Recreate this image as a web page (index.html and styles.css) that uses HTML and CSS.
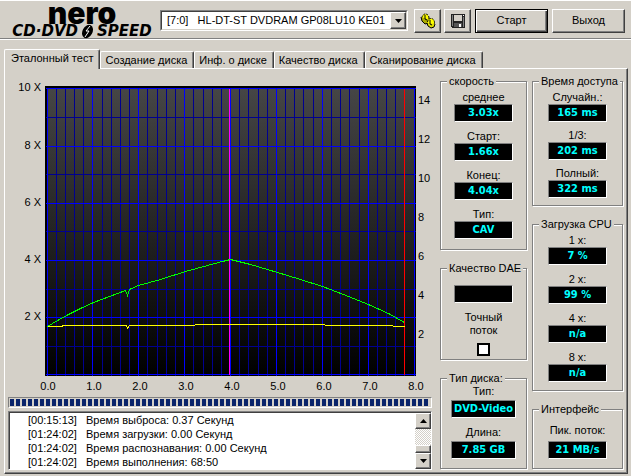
FILE: index.html
```html
<!DOCTYPE html>
<html lang="ru">
<head>
    <meta charset="UTF-8">
    <meta name="viewport" content="width=device-width, initial-scale=1.0">
    <title>Nero CD-DVD Speed</title>
    <link rel="stylesheet" href="styles.css">
</head>
<body>
    <header class="toolbar">
        <div class="logo">
            <span class="logo-nero">nero</span>
            <span class="logo-speed">CD·DVD
                <svg width="15" height="15" viewBox="0 0 15 15"><ellipse cx="7.5" cy="7.5" rx="5" ry="7" transform="rotate(28 7.5 7.5)" fill="#000"/><path d="M10 2L6 7h3l-4 6" fill="none" stroke="#fff" stroke-width="1"/></svg>
                SPEED</span>
        </div>
        <div class="drive">
            <select id="drive" aria-label="Привод">
                <option>[7:0]&nbsp;&nbsp; HL-DT-ST DVDRAM GP08LU10 KE01</option>
            </select>
            <span class="drive-arrow"><svg width="7" height="4" viewBox="0 0 7 4"><path d="M0 0h7L3.500 4z"/></svg></span>
        </div>
        <button class="btn btn-icon" aria-label="Настройки">
            <svg width="16" height="16" viewBox="0 0 16 16">
                <g stroke="#000" stroke-width="1">
                    <ellipse cx="5.500" cy="5" rx="3.500" ry="4" fill="#ff0" stroke-dasharray="2 1"/>
                    <path d="M1 4l1 4 3 3 4-1 1-3" fill="#aa0"/>
                    <path d="M5 2v4l2 1" fill="none"/>
                    <ellipse cx="11" cy="9.500" rx="3.500" ry="4" fill="#ff0" stroke-dasharray="2 1"/>
                    <path d="M7 10l1 3 3 2 3-1 1-3" fill="#dd0"/>
                    <path d="M10 7v4l2 1" fill="none"/>
                </g>
            </svg>
        </button>
        <button class="btn btn-icon" aria-label="Сохранить">
            <svg width="14" height="14" viewBox="0 0 14 14" shape-rendering="crispEdges">
                <path d="M0 0h14v14H1L0 13z" fill="#222"/>
                <path d="M1 1h1v11H1zM12 3h1v10h-1z" fill="#808080"/>
                <path d="M3 1h8v6H3z" fill="#d4d0c8"/>
                <path d="M12 1h1v1h-1z" fill="#fff"/>
                <path d="M3 9h8v4H3z" fill="#555"/>
                <path d="M8 10h2v3H8z" fill="#fff"/>
            </svg>
        </button>
        <button class="btn btn-default">Старт</button>
        <button class="btn">Выход</button>
    </header>

    <nav class="tabs">
        <a href="#bench" class="tab active">Эталонный тест</a>
        <a href="#create" class="tab">Создание диска</a>
        <a href="#info" class="tab">Инф. о диске</a>
        <a href="#quality" class="tab">Качество диска</a>
        <a href="#scan" class="tab">Сканирование диска</a>
    </nav>

    <main class="panel" id="bench">
        <section class="left">
            <svg class="chart" viewBox="0 0 424 320">
                <defs>
                    <linearGradient id="plotBg" x1="0" y1="0" x2="0" y2="1">
                        <stop offset="0" stop-color="#464646"/>
                        <stop offset="1" stop-color="#000"/>
                    </linearGradient>
                </defs>
                <rect x="37" y="11" width="371" height="290" fill="#000"/>
                <rect x="39" y="13" width="368" height="287" fill="url(#plotBg)"/>
                <g class="lines" transform="translate(.5 .5)">
                    <path class="minor" d="M48 13V300M57 13V300M66 13V300M75 13V300M94 13V300M103 13V300M112 13V300M121 13V300M139 13V300M149 13V300M158 13V300M167 13V300M185 13V300M195 13V300M204 13V300M213 13V300M231 13V300M240 13V300M250 13V300M259 13V300M277 13V300M286 13V300M295 13V300M305 13V300M323 13V300M332 13V300M341 13V300M351 13V300M369 13V300M378 13V300M387 13V300M396 13V300"/>
                    <path class="minor" d="M37 42H407M37 99H407M37 156H407M37 214H407M37 271H407"/>
                    <path class="major" d="M39 13V300M84 13V300M130 13V300M176 13V300M222 13V300M268 13V300M314 13V300M360 13V300M406 13V300"/>
                    <path class="major" d="M37 13H407M37 71H407M37 128H407M37 185H407M37 242H407M37 299H407"/>
                    <path class="layer" d="M221 13V299"/>
                    <path class="end" d="M396 13V299"/>
                    <polyline class="speed" points="39,251 49,245 60,239 72,233 85,227 109,218 117,215 119,220 121,214 130,210 152,204 177,196 210,187 222,184 242,189 269,197 292,204 314,211 335,219 360,229 380,238 396,247"/>
                    <polyline class="rotation" points="39,251 54,251 54,250 118,250 119,253 121,250 186,250 187,249 316,249 317,250 384,250 385,251 396,251"/>
                </g>
                <g text-anchor="end">
                    <text x="33" y="16">10 X</text>
                    <text x="33" y="74">8 X</text>
                    <text x="33" y="131">6 X</text>
                    <text x="33" y="188">4 X</text>
                    <text x="33" y="245">2 X</text>
                </g>
                <g>
                    <text x="410" y="29">14</text>
                    <text x="410" y="68">12</text>
                    <text x="410" y="107">10</text>
                    <text x="410" y="146">8</text>
                    <text x="410" y="185">6</text>
                    <text x="410" y="224">4</text>
                    <text x="410" y="263">2</text>
                </g>
                <g text-anchor="middle">
                    <text x="40" y="315">0.0</text>
                    <text x="86" y="315">1.0</text>
                    <text x="132" y="315">2.0</text>
                    <text x="178" y="315">3.0</text>
                    <text x="224" y="315">4.0</text>
                    <text x="270" y="315">5.0</text>
                    <text x="316" y="315">6.0</text>
                    <text x="362" y="315">7.0</text>
                    <text x="408" y="315">8.0</text>
                </g>
            </svg>
            <div class="progress"><div class="progress-bar"></div></div>
            <div class="log">
                <ul class="log-lines">
                    <li><span class="time">[00:15:13]</span>Время выброса: 0.37 Секунд</li>
                    <li><span class="time">[01:24:02]</span>Время загрузки: 0.00 Секунд</li>
                    <li><span class="time">[01:24:02]</span>Время распознавания: 0.00 Секунд</li>
                    <li><span class="time">[01:24:02]</span>Время выполнения: 68:50</li>
                </ul>
                <div class="scroll">
                    <button class="scroll-btn" aria-label="Вверх"><svg width="7" height="4" viewBox="0 0 7 4"><path d="M0 4h7L3.500 0z"/></svg></button>
                    <div class="scroll-track"><div class="scroll-thumb"></div></div>
                    <button class="scroll-btn" aria-label="Вниз"><svg width="7" height="4" viewBox="0 0 7 4"><path d="M0 0h7L3.500 4z"/></svg></button>
                </div>
            </div>
        </section>

        <section class="col">
            <fieldset class="group speed-group">
                <legend>скорость</legend>
                <div class="item">среднее<output class="value">3.03x</output></div>
                <div class="item">Старт:<output class="value">1.66x</output></div>
                <div class="item">Конец:<output class="value">4.04x</output></div>
                <div class="item">Тип:<output class="value">CAV</output></div>
            </fieldset>
            <fieldset class="group dae-group">
                <legend>Качество DAE</legend>
                <output class="value"></output>
                <label class="exact">Точный<br>поток<input type="checkbox"></label>
            </fieldset>
            <fieldset class="group disc-group">
                <legend>Тип диска:</legend>
                <div class="item">Тип:<output class="value wide">DVD-Video</output></div>
                <div class="item">Длина:<output class="value wide">7.85 GB</output></div>
            </fieldset>
        </section>

        <section class="col">
            <fieldset class="group access-group">
                <legend>Время доступа</legend>
                <div class="item">Случайн.:<output class="value">165 ms</output></div>
                <div class="item">1/3:<output class="value">202 ms</output></div>
                <div class="item">Полный:<output class="value">322 ms</output></div>
            </fieldset>
            <fieldset class="group cpu-group">
                <legend>Загрузка CPU</legend>
                <div class="item">1 x:<output class="value">7 %</output></div>
                <div class="item">2 x:<output class="value">99 %</output></div>
                <div class="item">4 x:<output class="value">n/a</output></div>
                <div class="item">8 x:<output class="value">n/a</output></div>
            </fieldset>
            <fieldset class="group iface-group">
                <legend>Интерфейс</legend>
                <div class="item">Пик. поток:<output class="value">21 MB/s</output></div>
            </fieldset>
        </section>
    </main>
</body>
</html>
```
FILE: styles.css
```css
* {
    box-sizing: border-box;
}

body {
    margin: 0;
    background-color: #d4d0c8;
    color: #000;
    font: 11px/13px "Liberation Sans", Arial, sans-serif;
}

button, select {
    font: inherit;
    color: inherit;
}

/* toolbar */
.toolbar {
    display: flex;
    align-items: center;
    gap: 4px;
    height: 40px;
    padding: 2px 6px 0 8px;
    border-bottom: 1px solid #fff;
    box-shadow: inset 0 1px #fff, inset 0 -1px #808080;
}

.logo {
    display: flex;
    flex-direction: column;
    align-items: center;
    width: 148px;
    white-space: nowrap;
}

.logo-nero {
    font: 900 30px/22px Inter, sans-serif;
}

.logo-speed {
    display: flex;
    align-items: center;
    gap: 2px;
    font: italic bold 15px/15px "DejaVu Sans", sans-serif;
}

.drive {
    position: relative;
    flex: 1;
    border: 1px solid;
    border-color: #808080 #fff #fff #808080;
}

.drive select {
    display: block;
    width: 100%;
    height: 19px;
    padding: 0 18px 0 5px;
    border: 1px solid;
    border-color: #404040 #d4d0c8 #d4d0c8 #404040;
    border-radius: 0;
    background-color: #fff;
    appearance: none;
}

.drive-arrow {
    position: absolute;
    top: 1px;
    right: 1px;
    display: flex;
    align-items: center;
    justify-content: center;
    width: 16px;
    height: 17px;
    border: 1px solid;
    border-color: #fff #404040 #404040 #fff;
    background-color: #d4d0c8;
    box-shadow: inset -1px -1px #808080;
    pointer-events: none;
}

.btn {
    width: 73px;
    height: 24px;
    padding: 0;
    border: 1px solid;
    border-color: #fff #404040 #404040 #fff;
    background-color: #d4d0c8;
    box-shadow: inset -1px -1px #808080;
}

.btn-icon {
    display: flex;
    align-items: center;
    justify-content: center;
    width: 27px;
    margin-right: -1px;
}

.drive + .btn-icon {
    margin-left: 2px;
}

.btn-default {
    margin-left: 1px;
    border: 1px solid #000;
    box-shadow: inset 1px 1px #fff, inset -1px -1px #404040, inset -2px -2px #808080;
}

/* tabs */
.tabs {
    display: flex;
    align-items: flex-end;
    height: 28px;
    padding: 0 4px;
}

.tab {
    height: 17px;
    padding: 2px 6px 0 4px;
    border: 1px solid;
    border-color: #fff #404040 transparent #fff;
    border-bottom: 0;
    border-radius: 2px 2px 0 0;
    box-shadow: inset -1px 0 #808080;
    color: #000;
    text-decoration: none;
    white-space: nowrap;
}

.tab.active {
    position: relative;
    height: 20px;
    margin-bottom: -1px;
    padding: 2px 6px 0;
    background-color: #d4d0c8;
}

.panel {
    display: grid;
    grid-template-columns: 1fr 87px 91px;
    column-gap: 5px;
    margin: 0 3px 0 4px;
    padding: 6px 4px 3px 3px;
    border: 1px solid;
    border-color: #fff #404040 #404040 #fff;
    box-shadow: inset -1px -1px #808080;
}

.left {
    min-width: 0;
    margin-right: 3px;
}

/* chart */
.chart {
    display: block;
    width: 100%;
    margin-bottom: 2px;
}

.lines {
    fill: none;
    stroke-width: 1;
    shape-rendering: crispEdges;
}

.minor { stroke: #000090; }
.major { stroke: #0000ff; }
.layer { stroke: #ff00ff; }
.end { stroke: #ff0000; }
.speed { stroke: #00ff00; }
.rotation { stroke: #ffff00; }

.progress {
    height: 11px;
    padding: 1px;
    border: 1px solid;
    border-color: #808080 #fff #fff #808080;
}

.progress-bar {
    height: 7px;
    background: repeating-linear-gradient(90deg, #0a246a 0 4px, transparent 4px 6px);
}

/* log */
.log {
    display: flex;
    margin-top: 3px;
    border: 1px solid;
    border-color: #808080 #fff #fff #808080;
    box-shadow: inset 1px 1px #404040;
    background-color: #fff;
}

.log-lines {
    flex: 1;
    margin: 0;
    padding: 1px 0 0 19px;
    list-style: none;
    line-height: 14px;
}

.time {
    display: inline-block;
    width: 58px;
}

.scroll {
    display: flex;
    flex-direction: column;
    width: 16px;
    margin-top: 1px;
}

.scroll-btn, .scroll-thumb {
    border: 1px solid;
    border-color: #fff #404040 #404040 #fff;
    background-color: #d4d0c8;
    box-shadow: inset -1px -1px #808080;
}

.scroll-btn {
    display: flex;
    align-items: center;
    justify-content: center;
    height: 16px;
    padding: 0;
}

.scroll-track {
    display: flex;
    flex: 1;
    align-items: flex-end;
    background: repeating-conic-gradient(#fff 0 25%, #d4d0c8 0 50%) 0 0 / 2px 2px;
}

.scroll-thumb {
    width: 100%;
    height: 8px;
}

/* right columns */
.col {
    display: flex;
    flex-direction: column;
    gap: 12px;
}

.group {
    display: flex;
    flex-direction: column;
    align-items: center;
    gap: 8px;
    min-width: 0;
    margin: 0;
    padding: 3px 0 9px;
    border: 1px solid #808080;
    box-shadow: 1px 1px #fff, inset 1px 1px #fff;
    white-space: nowrap;
}

.group legend {
    margin-left: 6px;
    padding: 0 2px;
    background-color: #d4d0c8;
}

.item, .exact {
    text-align: center;
}

.value {
    display: block;
    width: 59px;
    height: 18px;
    margin: 0 auto;
    border: 1px solid;
    border-color: #808080 #fff #fff #808080;
    background-color: #000;
    color: #00ffff;
    font: bold 11px/15px "DejaVu Sans Condensed", "DejaVu Sans", sans-serif;
}

.value.wide {
    width: 65px;
}

.speed-group {
    padding-bottom: 10px;
}

.access-group {
    gap: 7px;
    padding-bottom: 7px;
}

.cpu-group {
    padding-bottom: 8px;
}

.dae-group {
    padding: 10px 0 3px;
}

.exact input {
    display: block;
    width: 13px;
    height: 13px;
    margin: 6px auto 0;
    border: 2px solid #000;
    background-color: #fff;
    appearance: none;
}

.disc-group {
    padding-top: 0;
}

.disc-group .value {
    margin-top: 2px;
}

.iface-group {
    padding-top: 8px;
}

.iface-group .value {
    margin-top: 4px;
}
```
